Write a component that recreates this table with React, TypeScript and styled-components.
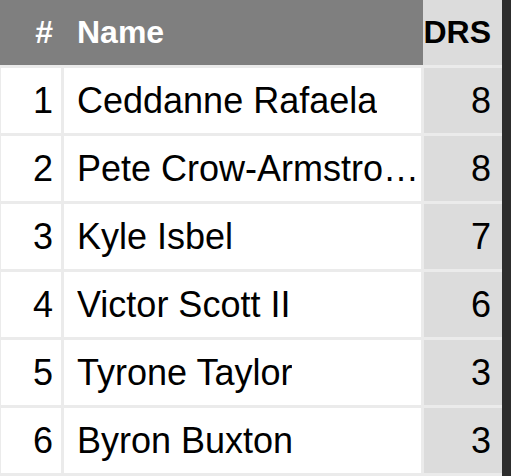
import React from "react";
import styled, { createGlobalStyle } from "styled-components";

const GlobalStyle = createGlobalStyle`
  body {
    margin: 0;
    background: #ebebeb;
    font-family: "Liberation Sans", Arial, sans-serif;
  }
`;

const Frame = styled.div`
  display: flex;
  width: 511px;
  height: 476px;
  background: #ebebeb;
  overflow: hidden;
`;

const Table = styled.div`
  width: 502px;
  display: flex;
  flex-direction: column;
  gap: 3px;
`;

const Edge = styled.div`
  width: 9px;
  background: #2d2d2d;
`;

const HeaderRow = styled.div`
  display: grid;
  grid-template-columns: 61px 362px 79px;
  height: 65px;
  font-weight: bold;
  font-size: 32px;
`;

const HeadCell = styled.div<{ $align?: "left" | "right"; $light?: boolean }>`
  display: flex;
  align-items: center;
  justify-content: ${(p) => (p.$align === "right" ? "flex-end" : "flex-start")};
  background: ${(p) => (p.$light ? "#dcdcdc" : "#7f7f7f")};
  color: ${(p) => (p.$light ? "#000" : "#fff")};
  padding: ${(p) => (p.$align === "right" ? "0 8px 0 0" : "0 0 0 16px")};
  white-space: nowrap;
`;

const DrsHead = styled(HeadCell)`
  padding-right: 11px;
`;

const Row = styled.div`
  display: grid;
  grid-template-columns: 60px 357px 78px;
  column-gap: 3px;
  padding-left: 1px;
  height: 65px;
  font-size: 36px;
`;

const Cell = styled.div<{ $shade?: boolean }>`
  display: flex;
  align-items: center;
  background: ${(p) => (p.$shade ? "#dcdcdc" : "#fff")};
  color: #000;
  min-width: 0;
`;

const NumCell = styled(Cell)`
  justify-content: flex-end;
  padding-right: 8px;
`;

const NameCell = styled(Cell)`
  padding: 0 1px 0 13px;
`;

const NameText = styled.span`
  overflow: hidden;
  white-space: nowrap;
  text-overflow: ellipsis;
`;

const DrsCell = styled(Cell)`
  justify-content: flex-end;
  padding-right: 11px;
`;

const players = [
  { name: "Ceddanne Rafaela", drs: 8 },
  { name: "Pete Crow-Armstrong", drs: 8 },
  { name: "Kyle Isbel", drs: 7 },
  { name: "Victor Scott II", drs: 6 },
  { name: "Tyrone Taylor", drs: 3 },
  { name: "Byron Buxton", drs: 3 },
];

export default function App() {
  return (
    <>
      <GlobalStyle />
      <Frame>
        <Table>
          <HeaderRow>
            <HeadCell $align="right">#</HeadCell>
            <HeadCell>Name</HeadCell>
            <DrsHead $align="right" $light>
              DRS
            </DrsHead>
          </HeaderRow>
          {players.map((p, i) => (
            <Row key={p.name}>
              <NumCell>{i + 1}</NumCell>
              <NameCell>
                <NameText>{p.name}</NameText>
              </NameCell>
              <DrsCell $shade>{p.drs}</DrsCell>
            </Row>
          ))}
        </Table>
        <Edge />
      </Frame>
    </>
  );
}
